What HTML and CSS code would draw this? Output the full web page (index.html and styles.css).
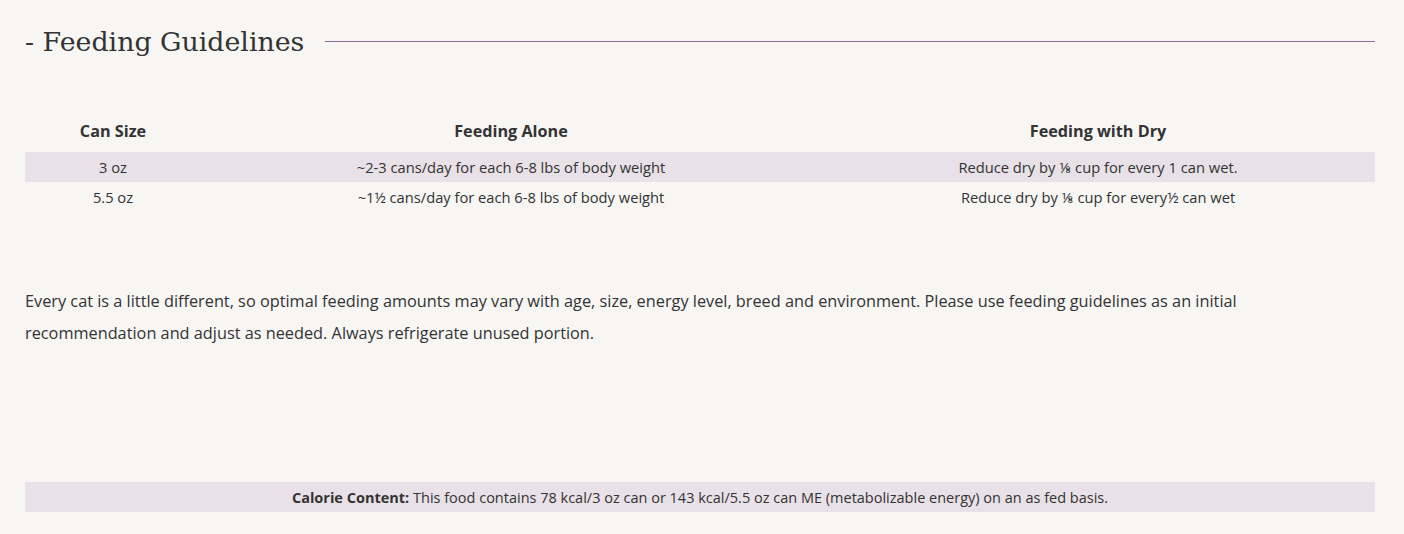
FILE: index.html
```html
<!DOCTYPE html>
<html>
<head>
<meta charset="utf-8">
<link rel="stylesheet" href="styles.css">
</head>
<body>
<div class="page">
  <div class="title-row">
    <h2 class="title">- Feeding Guidelines</h2>
    <div class="rule"></div>
  </div>
  <table class="guide">
    <thead>
      <tr><th class="c1">Can Size</th><th class="c2">Feeding Alone</th><th class="c3">Feeding with Dry</th></tr>
    </thead>
    <tbody>
      <tr class="shade"><td>3 oz</td><td>~2-3 cans/day for each 6-8 lbs of body weight</td><td>Reduce dry by ⅛ cup for every 1 can wet.</td></tr>
      <tr><td>5.5 oz</td><td>~1½ cans/day for each 6-8 lbs of body weight</td><td>Reduce dry by ⅛ cup for every½ can wet</td></tr>
    </tbody>
  </table>
  <p class="note">Every cat is a little different, so optimal feeding amounts may vary with age, size, energy level, breed and environment. Please use feeding guidelines as an initial recommendation and adjust as needed. Always refrigerate unused portion.</p>
  <div class="calorie"><strong>Calorie Content:</strong> This food contains 78 kcal/3 oz can or 143 kcal/5.5 oz can ME (metabolizable energy) on an as fed basis.</div>
</div>
</body>
</html>
```
FILE: styles.css
```css
html, body { margin: 0; padding: 0; background: #f7f6f3; }
body { font-family: "Open Sans", "Noto Sans", sans-serif; color: #333; }
.page { padding: 0 29px 0 25px; }
.title-row { display: flex; align-items: center; gap: 21px; padding-top: 20px; height: 42px; }
.title { margin: 0; font-family: "DejaVu Serif", "Liberation Serif", serif; font-weight: 400; font-size: 26.8px; color: #333; white-space: nowrap; }
.rule { flex: 1; height: 1px; background: #93689f; }
.guide { width: 100%; border-collapse: collapse; margin-top: 52px; font-size: 14.7px; }
.guide th { font-weight: 700; font-size: 16.2px; height: 30px; padding: 2px 0 6px; text-align: center; }
.guide td { height: 30px; padding: 0; text-align: center; }
.c1 { width: 176px; }
.c2 { width: 620px; }
.shade td { background: #e8e1e7; }
.note { margin: 73px 0 0; font-size: 16.3px; line-height: 32px; max-width: 1225px; }
.calorie { margin-top: 133px; background: #e8e1e7; height: 30px; padding-top: 1px; box-sizing: border-box; line-height: 30px; text-align: center; font-size: 14.5px; }
```
